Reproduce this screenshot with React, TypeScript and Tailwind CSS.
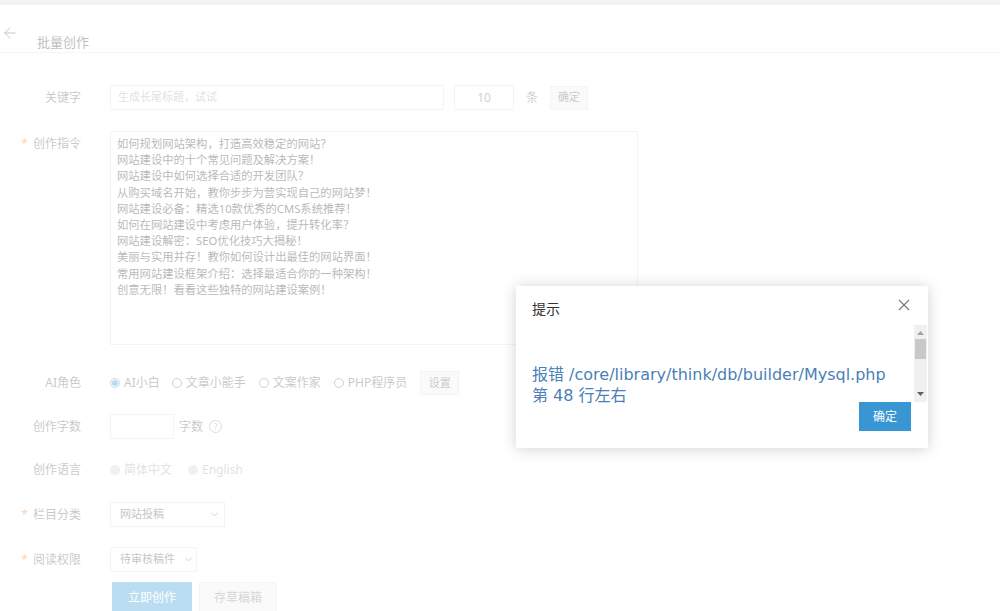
import { ArrowLeft, ChevronDown } from 'lucide-react';

const lines = [
  '如何规划网站架构，打造高效稳定的网站？',
  '网站建设中的十个常见问题及解决方案！',
  '网站建设中如何选择合适的开发团队？',
  '从购买域名开始，教你步步为营实现自己的网站梦！',
  '网站建设必备：精选10款优秀的CMS系统推荐！',
  '如何在网站建设中考虑用户体验，提升转化率？',
  '网站建设解密：SEO优化技巧大揭秘！',
  '美丽与实用并存！教你如何设计出最佳的网站界面！',
  '常用网站建设框架介绍：选择最适合你的一种架构！',
  '创意无限！看看这些独特的网站建设案例！',
];

function Label({ text, required }: { text: string; required?: boolean }) {
  return (
    <div className="w-[81px] shrink-0 text-right text-[12px] text-[#666]">
      {required && <span className="mr-[5px] text-[#f0862f]">*</span>}
      {text}
    </div>
  );
}

function Radio({ label, checked, disabled }: { label: string; checked?: boolean; disabled?: boolean }) {
  return (
    <label className="flex items-center">
      {disabled ? (
        <span className="h-[10px] w-[10px] rounded-full bg-[#d4d4d4]" />
      ) : checked ? (
        <span className="flex h-[10px] w-[10px] items-center justify-center rounded-full border border-[#3a96d0]">
          <span className="h-[6px] w-[6px] rounded-full bg-[#3a96d0]" />
        </span>
      ) : (
        <span className="h-[10px] w-[10px] rounded-full border border-[#777]" />
      )}
      <span className={`ml-[4px] text-[12px] ${disabled ? 'text-[#aaa]' : 'text-[#666]'}`}>{label}</span>
    </label>
  );
}

export default function App() {
  return (
    <div className="relative h-[611px] w-full overflow-hidden bg-white font-['Noto_Sans','Noto_Sans_CJK_SC',sans-serif]">
      {/* page */}
      <div className="h-[5px] bg-[#dcdcdc]" />
      <div className="flex h-[48px] border-b border-[#e6e6e6]">
        <ArrowLeft className="ml-[1px] mt-[19px] h-[18px] w-[18px] text-[#555]" strokeWidth={1.3} />
        <div className="ml-[18px] mt-[28px] text-[13px] leading-[18px] text-[#444]">批量创作</div>
      </div>

      <div className="flex flex-col">
        <div className="mt-[32px] flex items-center gap-[29px]">
          <Label text="关键字" />
          <div className="flex items-center">
            <div className="flex h-[25px] w-[334px] items-center border border-[#e0e0e0] px-[7px] text-[11px] text-[#aaa]">
              生成长尾标题，试试
            </div>
            <div className="ml-[10px] flex h-[25px] w-[60px] items-center justify-center border border-[#e0e0e0] text-[12px] text-[#777]">
              10
            </div>
            <span className="ml-[12px] text-[12px] text-[#777]">条</span>
            <div className="ml-[12px] flex h-[24px] w-[38px] items-center justify-center border border-[#e0e0e0] bg-[#f2f2f2] text-[11px] text-[#666]">
              确定
            </div>
          </div>
        </div>

        <div className="mt-[21px] flex items-start gap-[29px]">
          <div className="pt-[4px]">
            <Label text="创作指令" required />
          </div>
          <div className="h-[214px] w-[528px] border border-[#e0e0e0] px-[6px] pt-[4px] text-[11.3px] leading-[16.2px] text-[#333]">
            {lines.map((l) => (
              <div key={l}>{l}</div>
            ))}
          </div>
        </div>

        <div className="mt-[26px] flex h-[24px] items-center gap-[29px]">
          <Label text="AI角色" />
          <div className="flex items-center">
            <Radio label="AI小白" checked />
            <div className="ml-[12px]"><Radio label="文章小能手" /></div>
            <div className="ml-[13px]"><Radio label="文案作家" /></div>
            <div className="ml-[13px]"><Radio label="PHP程序员" /></div>
            <div className="ml-[13px] flex h-[24px] w-[39px] items-center justify-center border border-[#e0e0e0] bg-[#f2f2f2] text-[11px] text-[#666]">
              设置
            </div>
          </div>
        </div>

        <div className="mt-[19px] flex items-center gap-[29px]">
          <Label text="创作字数" />
          <div className="flex items-center">
            <div className="h-[25px] w-[64px] border border-[#e0e0e0]" />
            <span className="ml-[5px] text-[12px] text-[#666]">字数</span>
            <span className="ml-[6px] flex h-[13px] w-[13px] items-center justify-center rounded-full border border-[#999] text-[9px] leading-none text-[#999]">
              ?
            </span>
          </div>
        </div>

        <div className="mt-[19px] flex h-[24px] items-center gap-[29px]">
          <Label text="创作语言" />
          <div className="flex items-center">
            <Radio label="简体中文" disabled />
            <div className="ml-[16px]"><Radio label="English" disabled /></div>
          </div>
        </div>

        <div className="mt-[20px] flex items-center gap-[29px]">
          <Label text="栏目分类" required />
          <div className="flex h-[25px] w-[115px] items-center justify-between border border-[#e0e0e0] pl-[9px] pr-[4px] text-[11px] text-[#555]">
            网站投稿
            <ChevronDown className="h-[11px] w-[11px] text-[#666]" strokeWidth={2} />
          </div>
        </div>

        <div className="mt-[20px] flex items-center gap-[29px]">
          <Label text="阅读权限" required />
          <div className="flex h-[25px] w-[87px] items-center justify-between border border-[#e0e0e0] pl-[9px] pr-[2px] text-[11px] text-[#555]">
            待审核稿件
            <ChevronDown className="h-[11px] w-[11px] text-[#666]" strokeWidth={2} />
          </div>
        </div>

        <div className="ml-[112px] mt-[10px] flex gap-[7px]">
          <div className="flex h-[32px] w-[80px] items-center justify-center bg-[#3c9fd6] text-[12px] text-white">
            立即创作
          </div>
          <div className="flex h-[32px] w-[78px] items-center justify-center border border-[#e4e4e4] bg-[#f0f0f0] text-[12px] text-[#888]">
            存草稿箱
          </div>
        </div>
      </div>

      {/* shade */}
      <div className="absolute inset-0 bg-white/65" />

      {/* dialog */}
      <div className="absolute left-[516px] top-[286px] flex w-[412px] flex-col bg-white pb-[17px] pl-[16px] shadow-[0_1px_14px_rgba(0,0,0,0.18)]">
        <div className="flex items-start pt-[13px]">
          <div className="flex-1 text-[14px] leading-[20px] text-[#333]">提示</div>
          <svg className="mr-[18px] h-[12px] w-[12px]" viewBox="0 0 12 12">
            <path d="M1 1L11 11M11 1L1 11" stroke="#777" strokeWidth="1.1" fill="none" />
          </svg>
        </div>
        <div className="mr-[1px] mt-[6px] flex h-[77px]">
          <div className="flex-1 pt-[39px] font-['DejaVu_Sans','Noto_Sans_CJK_SC',sans-serif] text-[16px] leading-[21px] text-[#4a7fb8]">
            <div>报错 /core/library/think/db/builder/Mysql.php</div>
            <div>第 48 行左右</div>
          </div>
          <div className="flex w-[13px] flex-col items-center bg-[#f0f0f0]">
            <svg className="mt-[6px] h-[4px] w-[7px]" viewBox="0 0 7 4">
              <path d="M3.5 0L7 4H0Z" fill="#a3a3a3" />
            </svg>
            <div className="mt-[4px] h-[20px] w-[11px] bg-[#c8c8c8]" />
            <div className="flex-1" />
            <svg className="mb-[6px] h-[4px] w-[7px]" viewBox="0 0 7 4">
              <path d="M0 0H7L3.5 4Z" fill="#606060" />
            </svg>
          </div>
        </div>
        <div className="flex justify-end pr-[17px]">
          <div className="flex h-[29px] w-[52px] items-center justify-center bg-[#3897d2] text-[12px] text-white">
            确定
          </div>
        </div>
      </div>
    </div>
  );
}
